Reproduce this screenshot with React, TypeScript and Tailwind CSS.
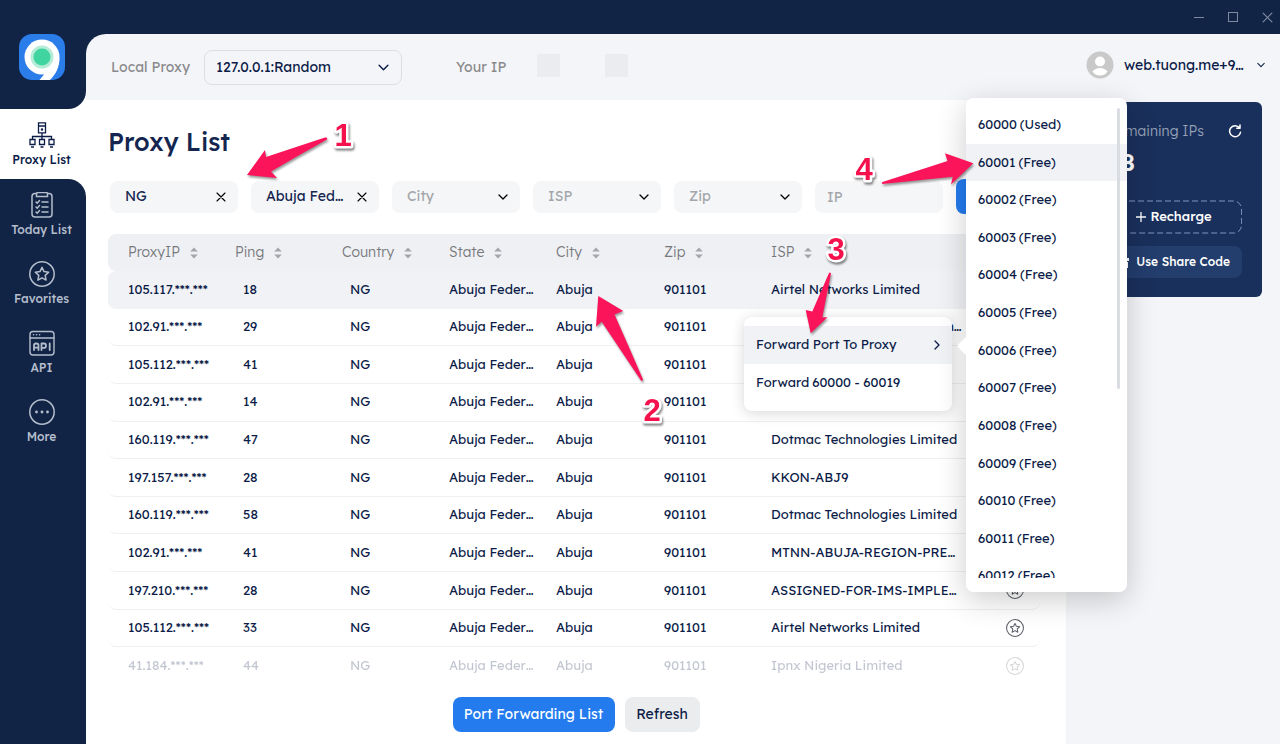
import React from "react";

const NAV_STROKE = "currentColor";

function Logo() {
  return (
    <svg viewBox="0 0 46 46" className="size-[46px]" aria-label="9Proxy" role="img">
      <defs>
        <clipPath id="logo-clip">
          <rect width="46" height="46" rx="13" />
        </clipPath>
      </defs>
      <g clipPath="url(#logo-clip)">
        <rect width="46" height="46" fill="#2b7de9" />
        <path d="M40.500 24C40.500 34 36 41 31 46H20.500C23 43 25.500 40 26 38Z" fill="#fff" />
        <circle cx="23" cy="23" r="17.500" fill="#fff" />
      </g>
      <circle cx="23" cy="23" r="11.500" fill="#b5ecd8" />
      <circle cx="23" cy="23" r="8.500" fill="#3fd4a0" />
    </svg>
  );
}

function ProxyIcon() {
  return (
    <svg viewBox="0 0 26 26" className="size-[26px]" fill="none" stroke={NAV_STROKE} strokeWidth="1.300">
      <path d="M9.500 .8h7v10h-7zM9.500 4h7M13 11v4M3.500 17v-2.500h19V17M13 14v3" />
      <path d="M1 17.500h5v5H1zM10.500 17.500h5v5h-5zM20 17.500h5v5h-5zM2 25h3M11.500 25h3M21 25h3" />
      <circle cx="13" cy="7.500" r=".6" fill={NAV_STROKE} />
    </svg>
  );
}

function ClipboardIcon() {
  return (
    <svg viewBox="0 0 26 26" className="size-[26px]" fill="none" stroke={NAV_STROKE} strokeWidth="1.500" strokeLinecap="round">
      <rect x="3" y="1.500" width="20" height="23.500" rx="3" />
      <path d="M7.500 4.500h11V2q0-1.500-1.500-1.500H9Q7.500 .5 7.500 2z" fill="#112446" />
      <path d="M13 10h6M13 15h6M13 20h6M7 10l1.200 1.200L10.500 8.500M7 15l1.200 1.200 2.300-2.700M7 20l1.200 1.200 2.300-2.700" />
    </svg>
  );
}

function StarCircle({ className }: { className: string }) {
  return (
    <svg viewBox="0 0 26 26" className={className} fill="none" stroke={NAV_STROKE} strokeWidth="1.500" strokeLinejoin="round">
      <circle cx="13" cy="13" r="12.200" />
      <path d="M13 6.300l2 4.300 4.700.6-3.500 3.200.9 4.700-4.100-2.300-4.100 2.300.9-4.700-3.500-3.200 4.700-.6z" />
    </svg>
  );
}

function ApiIcon() {
  return (
    <svg viewBox="0 0 26 26" className="size-[26px]" fill="none" stroke={NAV_STROKE} strokeWidth="1.400" strokeLinecap="round" strokeLinejoin="round">
      <rect x="1" y="1.500" width="24" height="23.500" rx="3" />
      <path d="M1 8h24M4.500 4.800h.2M7.500 4.800h.2M10.500 4.800h.2" />
      <path d="M5 20v-4.500q0-2 2-2h.5q2 0 2 2v4.500M5 17.700h4.500M12.500 20V13.500h2.500q2 0 2 2.200t-2 2.200h-2.500M20.700 13.500v6.500" strokeWidth="1.800" />
    </svg>
  );
}

function MoreIcon() {
  return (
    <svg viewBox="0 0 26 26" className="size-[26px]" fill="none" stroke={NAV_STROKE} strokeWidth="1.500">
      <circle cx="13" cy="13" r="12.200" />
      <g fill={NAV_STROKE} stroke="none">
        <circle cx="7.500" cy="13" r="1.400" />
        <circle cx="13" cy="13" r="1.400" />
        <circle cx="18.500" cy="13" r="1.400" />
      </g>
    </svg>
  );
}

function Chevron({ className }: { className: string }) {
  return (
    <svg viewBox="0 0 10 10" className={className} fill="none" stroke="currentColor" strokeWidth="1.300" strokeLinecap="round" strokeLinejoin="round">
      <path d="M1 3l4 4 4-4" />
    </svg>
  );
}

function Cross({ className }: { className: string }) {
  return (
    <svg viewBox="0 0 10 10" className={className} fill="none" stroke="currentColor" strokeWidth="1.100" strokeLinecap="round">
      <path d="M1 1l8 8M9 1L1 9" />
    </svg>
  );
}

function Sorter() {
  return (
    <svg viewBox="0 0 8 12" className="h-3 w-2 shrink-0" fill="#a3a6ab">
      <path d="M4 .5L7.800 4.600H.2zM4 11.500L7.800 7.400H.2z" />
    </svg>
  );
}

const navItems = [
  { label: "Today List", icon: <ClipboardIcon /> },
  { label: "Favorites", icon: <StarCircle className="size-[26px]" /> },
  { label: "API", icon: <ApiIcon /> },
  { label: "More", icon: <MoreIcon /> },
];

function Sidebar() {
  return (
    <nav className="flex w-[86px] shrink-0 flex-col bg-white text-[12px] leading-4 font-medium">
      <div className="flex h-[75px] justify-center rounded-br-[18px] bg-[#112446] pr-[3px]">
        <Logo />
      </div>
      <button className="flex h-[70px] shrink-0 flex-col items-center gap-1 pt-[13px] pr-[3px] text-[#0c1c48]">
        <ProxyIcon />
        Proxy List
      </button>
      <div className="flex flex-1 flex-col rounded-tr-[18px] bg-[#112446] pr-[3px] text-[#b4bdcb]">
        {navItems.map((n) => (
          <button key={n.label} className="flex h-[69px] flex-col items-center gap-1 pt-[13px]">
            {n.icon}
            {n.label}
          </button>
        ))}
      </div>
    </nav>
  );
}

function TopBar() {
  return (
    <header className="flex h-[66px] shrink-0 items-center pr-[15px] pl-[25px] text-[14px]">
      <label htmlFor="local-proxy" className="w-[93px] text-[#8a8a8c]">Local Proxy</label>
      <div className="flex h-[35px] w-[198px] items-center rounded-lg border border-[#dcdee2] pr-3 text-[#0c1c48]">
        <select id="local-proxy" className="h-full flex-1 appearance-none pl-[11px] outline-none">
          <option>127.0.0.1:Random</option>
        </select>
        <Chevron className="size-[11px]" />
      </div>
      <span className="ml-[54px] w-[81px] text-[#8a8a8c]">Your IP</span>
      <span className="mb-1 size-[23px] bg-[#ebecf0]" />
      <span className="mb-1 ml-[45px] size-[23px] bg-[#ebecf0]" />
      <button className="mb-1 ml-auto flex items-center text-[#0c1c48]">
        <svg viewBox="0 0 28 28" className="mr-2.5 size-7">
          <circle cx="14" cy="14" r="13.500" fill="#c9c9c9" />
          <circle cx="14" cy="10.500" r="5" fill="#fff" />
          <path d="M6.500 20.500q2.500-3.500 7.500-3.500t7.500 3.500q-2.500 4-7.500 4t-7.500-4z" fill="#fff" />
        </svg>
        <span className="w-[133px] text-left">web.tuong.me+9…</span>
        <Chevron className="size-2" />
      </button>
    </header>
  );
}

const filters = [
  { label: "Country", value: "NG", set: true },
  { label: "State", value: "Abuja Fed…", set: true },
  { label: "City", value: "City", set: false },
  { label: "ISP", value: "ISP", set: false },
  { label: "Zip", value: "Zip", set: false },
];

function Filters() {
  return (
    <div className="flex h-[35px] items-center gap-[13px] pl-0.5">
      {filters.map((f) => (
        <div key={f.label} className="flex h-8 w-32 shrink-0 items-center rounded-lg bg-[#f5f6f8] pr-3">
          <select
            aria-label={f.label}
            className={
              f.set
                ? "h-full min-w-0 flex-1 appearance-none pl-[15px] text-[14px] text-[#142650] outline-none"
                : "h-full min-w-0 flex-1 appearance-none pl-[15px] text-[14px] text-[#a4a6aa] outline-none"
            }
          >
            <option>{f.value}</option>
          </select>
          {f.set ? (
            <button aria-label={`Clear ${f.label}`}>
              <Cross className="size-[10px] text-black" />
            </button>
          ) : (
            <Chevron className="size-[10px] text-black" />
          )}
        </div>
      ))}
      <input
        aria-label="IP"
        placeholder="IP"
        className="h-8 w-32 shrink-0 rounded-lg bg-[#f5f6f8] px-3 text-[14px] outline-none placeholder:text-[#a4a6aa]"
      />
      <button aria-label="Search" className="h-[35px] min-w-0 flex-1 rounded-lg bg-[#247bee]" />
    </div>
  );
}

const columns = ["ProxyIP", "Ping", "Country", "State", "City", "Zip", "ISP"];

const rows: [string, number, string][] = [
  ["105.117.***.***", 18, "Airtel Networks Limited"],
  ["102.91.***.***", 29, "MTN Nigeria Communication…"],
  ["105.112.***.***", 41, "Airtel"],
  ["102.91.***.***", 14, "MTN"],
  ["160.119.***.***", 47, "Dotmac Technologies Limited"],
  ["197.157.***.***", 28, "KKON-ABJ9"],
  ["160.119.***.***", 58, "Dotmac Technologies Limited"],
  ["102.91.***.***", 41, "MTNN-ABUJA-REGION-PRE…"],
  ["197.210.***.***", 28, "ASSIGNED-FOR-IMS-IMPLE…"],
  ["105.112.***.***", 33, "Airtel Networks Limited"],
  ["41.184.***.***", 44, "Ipnx Nigeria Limited"],
];

function ProxyTable() {
  return (
    <table className="h-[451px] w-full table-fixed border-separate border-spacing-0 text-left text-[13px] whitespace-nowrap text-[#0c1c48]">
      <colgroup>
        <col className="w-[107px]" />
        <col className="w-[107px]" />
        <col className="w-[107px]" />
        <col className="w-[107px]" />
        <col className="w-[108px]" />
        <col className="w-[107px]" />
        <col />
        <col className="w-[74px]" />
      </colgroup>
      <thead>
        <tr className="h-[37px] text-[14px] text-[#77787c] [&>th]:bg-[#eef0f3]">
          {columns.map((c) => (
            <th key={c} className="p-0 pl-5 font-light first:rounded-l-lg">
              <span className="flex items-center gap-2.5">
                {c}
                <Sorter />
              </span>
            </th>
          ))}
          <th className="rounded-r-lg p-0" />
        </tr>
      </thead>
      <tbody>
        {rows.map(([ip, ping, isp], i) => (
          <tr
            key={i}
            className={
              i === 0
                ? "h-[37px] [&>td]:bg-[#f1f2f6]"
                : i === rows.length - 1
                  ? "h-[37px] opacity-25"
                  : "h-[37px] [&>td]:border-b [&>td]:border-[#efeff1]"
            }
          >
            <td className="rounded-l-lg p-0 pl-5">{ip}</td>
            <td className="p-0 pl-7">{ping}</td>
            <td className="p-0 pl-7">NG</td>
            <td className="p-0 pl-5">Abuja Feder…</td>
            <td className="p-0 pl-5">Abuja</td>
            <td className="p-0 pl-5">901101</td>
            <td className="p-0 pl-5">{isp}</td>
            <td className="rounded-r-lg p-0 pl-10">
              <button aria-label="Add to favorites" className="flex text-[#5d6069]">
                <StarCircle className="size-[18px]" />
              </button>
            </td>
          </tr>
        ))}
      </tbody>
    </table>
  );
}

function AccountCard() {
  return (
    <aside className="w-[214px] shrink-0 pt-0.5 pr-[18px] pl-4">
      <div className="flex h-[195px] flex-col rounded-md bg-[#1a305c] px-5 pt-[18px] text-[14px] text-white">
        <div className="flex items-center justify-end gap-6 leading-[22px] font-light text-[#98a3b8]">
          Remaining IPs
          <button aria-label="Refresh balance" className="text-white">
            <svg viewBox="0 0 14 14" className="size-[14px]" fill="none" stroke="currentColor" strokeWidth="1.500" strokeLinecap="round" strokeLinejoin="round">
              <path d="M12.500 8.300A5.500 5.500 0 1 1 11.500 3.800M12 1v3.200H8.800" />
            </svg>
          </button>
        </div>
        <div className="pl-[5px] text-[24px] leading-10 font-semibold">98</div>
        <div className="mt-[18px] flex flex-col gap-3">
          <button className="relative flex h-[34px] items-center justify-center gap-1 pl-1 text-[13px] font-medium">
            <svg className="absolute inset-0 h-full w-full" fill="none">
              <rect x="1" y="1" width="99%" height="32" rx="8" stroke="#7f94c0" strokeDasharray="6 3" />
            </svg>
            <svg viewBox="0 0 10 10" className="size-[10px]" stroke="currentColor" strokeWidth="1.300">
              <path d="M5 0v10M0 5h10" />
            </svg>
            Recharge
          </button>
          <button className="flex h-8 items-center justify-end gap-1.5 rounded-lg bg-[#233d6d] pr-3 text-[12px] font-medium whitespace-nowrap">
            <svg viewBox="0 0 14 14" className="size-[14px]" fill="currentColor">
              <path d="M1 3h12v3H1zM2 7h4v6H2zM8 7h4v6H8z" />
            </svg>
            Use Share Code
          </button>
        </div>
      </div>
    </aside>
  );
}

function ContextMenu() {
  return (
    <div className="absolute top-[317px] left-[744px] w-[208px] rounded-lg bg-white pt-[9px] pb-2.5 text-[13px] text-[#0c1c48] shadow-[0_2px_14px_rgba(0,0,0,0.16)]">
      <button className="flex h-[38px] w-full items-center justify-between bg-[#f1f2f6] pr-2.5 pl-3">
        Forward Port To Proxy
        <Chevron className="size-[10px] -rotate-90" />
      </button>
      <button className="flex h-[37px] w-full items-center gap-[3px] pl-3">
        <span>Forward</span>
        <span>60000 - 60019</span>
      </button>
    </div>
  );
}

const ports = Array.from({ length: 13 }, (_, i) => 60000 + i);

function PortMenu() {
  return (
    <div className="absolute top-[98px] left-[966px] w-[161px] rounded-lg text-[13px] text-[#0c1c48] shadow-[0_8px_30px_rgba(0,0,0,0.2)]">
      <div className="absolute top-[238px] left-[-5px] size-5 rotate-45 rounded-xs bg-white" />
      <div className="relative flex h-[494px] items-start rounded-lg bg-white pt-2">
        <div className="h-[472px] flex-1 overflow-hidden">
          <div className="flex h-[489px] flex-col">
            {ports.map((p, i) => (
              <button
                key={p}
                className={
                  i === 1
                    ? "flex flex-1 items-center gap-[3px] bg-[#f1f2f6] pl-3"
                    : "flex flex-1 items-center gap-[3px] pl-3"
                }
              >
                <span>{p}</span>
                <span>{i === 0 ? "(Used)" : "(Free)"}</span>
              </button>
            ))}
          </div>
        </div>
        <div className="absolute top-2.5 right-[7px] h-[281px] w-[3px] rounded-full bg-[#d9dce1]" />
      </div>
    </div>
  );
}

function Annotations() {
  const marks: [string, number, number][] = [
    ["1", 343, 146],
    ["2", 652, 421],
    ["3", 836, 260],
    ["4", 864, 180],
  ];
  return (
    <svg viewBox="0 0 1280 744" className="pointer-events-none absolute top-0 left-0 h-[744px] w-[1280px]">
      <g fill="#fb145a" className="drop-shadow-[1px_2px_1px_rgba(0,0,0,0.4)]">
        <path d="M247 175L265 150L266 157Q296 147 325 137.500Q328 137 327 139.500Q299 155 271 171.500L277 178Z" />
        <path d="M598.300 296L623.300 311L614.500 314.500Q629 347 643 379.500Q642.500 381.500 641 380.500L601.700 321.700L596 326.700Z" />
        <path d="M829 273Q830 272 831 273.500L822.300 317.300H827.500L810.700 333.300L805.700 310L812.300 311.500Z" />
        <path d="M882.500 182L947.500 161L945 153.300L973.300 163.300L951 184.500L952.700 176.700L882.500 184Q881 183 882.500 182Z" />
      </g>
      <g className="drop-shadow-[1px_2px_1px_rgba(0,0,0,0.5)]" fontFamily="Liberation Sans, sans-serif" fontWeight="700" fontSize="31" textAnchor="middle">
        {marks.map(([n, x, y]) => (
          <text key={n} x={x} y={y} fill="#f5114c" stroke="#fff" strokeWidth="5" strokeLinejoin="round" paintOrder="stroke">
            {n}
          </text>
        ))}
      </g>
    </svg>
  );
}

export default function App() {
  return (
    <div className="relative flex min-h-screen flex-col overflow-hidden bg-[#112446] font-['Lexend','Inter',sans-serif]">
      <div className="flex h-[34px] shrink-0 items-center justify-end gap-6 pr-[7px] text-[#7f8aa0]">
        <button aria-label="Minimize" className="h-px w-[10px] bg-[#7f8aa0]" />
        <button aria-label="Maximize" className="size-[10px] border border-[#7f8aa0]" />
        <button aria-label="Close">
          <Cross className="size-[11px]" />
        </button>
      </div>
      <div className="flex flex-1">
        <Sidebar />
        <div className="flex min-w-0 flex-1 flex-col overflow-hidden rounded-tl-[20px] bg-[#f4f5f8]">
          <TopBar />
          <div className="flex flex-1">
            <main className="flex min-w-0 flex-1 flex-col bg-white pr-[26px] pl-[22px]">
              <h1 className="pt-6 text-[25px] leading-9 font-medium text-[#142650]">Proxy List</h1>
              <div className="pt-[19px] pb-5">
                <Filters />
              </div>
              <ProxyTable />
              <div className="flex justify-center gap-2.5 pt-3 pb-3 pl-1">
                <button className="h-[35px] w-[162px] rounded-lg bg-[#247bee] text-[14px] text-white">Port Forwarding List</button>
                <button className="h-[35px] w-[75px] rounded-lg bg-[#ebecee] text-[14px] text-[#0c1c48]">Refresh</button>
              </div>
            </main>
            <AccountCard />
          </div>
        </div>
      </div>
      <ContextMenu />
      <PortMenu />
      <Annotations />
    </div>
  );
}
